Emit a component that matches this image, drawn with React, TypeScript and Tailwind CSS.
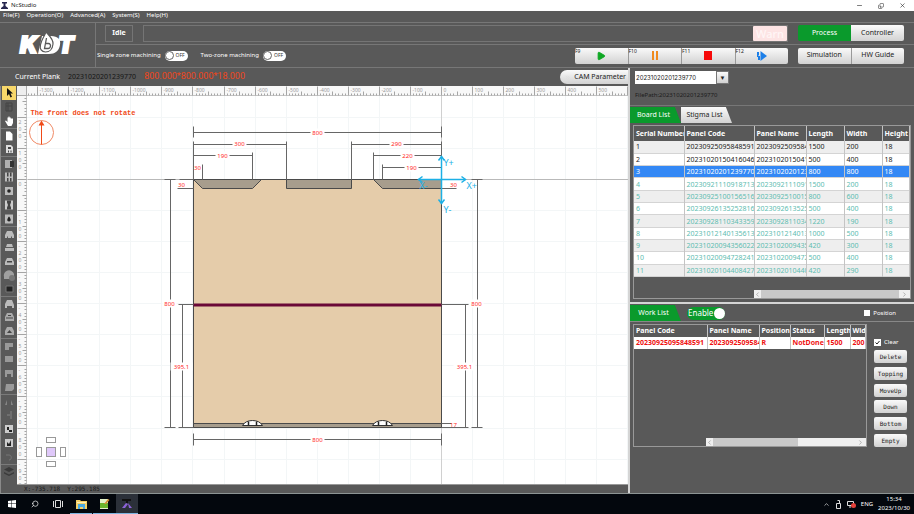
import React, { useState } from "react";
import { Minus, X, Copy, ChevronUp, Search, ChevronLeft, ChevronRight, ChevronsRight, Play } from "lucide-react";

const boards = [
  ["1", "20230925095848591", "1500", "200", "18"],
  ["2", "20231020150416046", "500", "400", "18"],
  ["3", "20231020201239770", "800", "800", "18"],
  ["4", "20230921110918713", "1500", "200", "18"],
  ["5", "20230925100156516", "800", "600", "18"],
  ["6", "20230926135252816", "500", "400", "18"],
  ["7", "20230928110343359", "1220", "190", "18"],
  ["8", "20231012140135613", "1000", "500", "18"],
  ["9", "20231020094356022", "420", "300", "18"],
  ["10", "20231020094728241", "500", "400", "18"],
  ["11", "20231020104408427", "420", "290", "18"],
];

const silver = "bg-gradient-to-b from-[#fafafa] to-[#d2d2d2] text-[#222]";

const Toggle: React.FC<{ id: string; label: string }> = ({ id, label }) => {
  const [on, setOn] = useState(false);
  return (
    <div className="flex items-center gap-1">
      <label htmlFor={id} className="text-[6px] text-white">{label}</label>
      <button
        id={id}
        role="switch"
        aria-checked={on}
        onClick={() => setOn(!on)}
        className="flex h-[10px] w-[23px] items-center rounded-full bg-white text-[5px] text-[#333]"
      >
        <span className="mr-[2px] size-[9px] shrink-0 rounded-full border border-[#666] bg-white" />
        {on ? "ON" : "OFF"}
      </button>
    </div>
  );
};

const Logo = () => (
  <svg width="60" height="26" viewBox="0 0 60 26" fill="#fff" aria-label="KDT" className="overflow-visible">
    <g
      fontFamily="Inter, sans-serif"
      fontWeight="900"
      fontStyle="italic"
      fontSize="23"
      stroke="#fff"
      strokeWidth="2"
    >
      <text x="2" y="21">K</text>
      <text x="40" y="21">T</text>
    </g>
    <path d="M24 4h9c7 0 10 3.500 9 9-1 6-5 9-11 9H20z" />
    <path
      d="M28 0c3 3.500 7.500 7 7 12-.4 5-3.500 8-7.500 8-4 0-6-3-5-7.500C23.500 8 26 5 28 0z"
      stroke="#595959"
      strokeWidth="1.200"
    />
    <path d="M28.500 6L26.500 16.500h3.500c3 0 3.500-5 .5-5h-2.500" fill="none" stroke="#595959" strokeWidth="1.300" />
  </svg>
);

// Glyphs of the drawing tools, each on a 14x14 grid
const tools: React.ReactNode[] = [
  <path d="M5 2v8l2-2 1.500 3.500 1.500-.7L8.500 7.500H11z" fill="#111" />,
  <path d="M4 3h6v8H4zM4 6h6M6 3v8" fill="none" stroke="#444" />,
  <path d="M3 7l1-.5 1.500 1.500V3.500h1V2.500h1v1h1.200v1H11V9l-1.500 3H6z" fill="#fff" />,
  <path d="M4 2.500h4l2.500 2.500v6.500H4z" fill="#fff" />,
  <g><path d="M4 3h5l2 2v6H4z" fill="#ddd" /><path d="M6 5h3v2H6zM6 8.500h1v2H6zM8.500 8.500h1v2h-1z" fill="#444" /></g>,
  <g><path d="M3 3h7v8H3z" fill="#b0b0b0" /><path d="M12 4a3 3 0 0 0 0 6z" fill="#333" /><path d="M8 4h3v6H8z" fill="#333" /></g>,
  <g><path d="M3 2.500h8v9H3z" fill="#bbb" /><path d="M5 2.500h1.500v4H5zM8 2.500h1.500v4H8zM5 8h1.500v3.500H5zM8 8h1.500v3.500H8z" fill="#444" /></g>,
  <g><path d="M3 3h8v8H3z" fill="#bbb" /><circle cx="7" cy="7" r="1.800" fill="#222" /></g>,
  <g><path d="M3 2.500h8v9H3z" fill="#ccc" /><path d="M5 2.500h4v2L8 7l1 2.500v2H5v-2L6 7 5 4.500z" fill="#444" /></g>,
  <g><path d="M3 2.500h8v9H3z" fill="#bbb" /><path d="M7 4.500c2 2 2.500 5 0 5s-2-3 0-5z" fill="#222" /></g>,
  <path d="M5 4h5l2 4v3h-2V9.500H9V11H6V9.500H5V11H3V8z" fill="#bbb" />,
  <path d="M5 4h5l1 3H4zM3 8h9v3H3z" fill="#bbb" />,
  <g><path d="M5 4h5l2 4v3H3V8z" fill="#bbb" /><path d="M5 7h5v1.500H5z" fill="#444" /></g>,
  <g><path d="M2 9a5 5 0 0 1 10-3v5H2z" fill="#a0a0a0" /><circle cx="10" cy="10" r="3" fill="#777" /></g>,
  <g><path d="M4 4h7v6H4z" fill="#222" stroke="#777" /></g>,
  <path d="M5 3h5l2 5v3h-2V9H5v2H3V7z" fill="#bbb" />,
  <g><path d="M5 3h5l2 4v4H3V7z" fill="#aaa" /><path d="M4 8h7M6 5.500h3" stroke="#444" /></g>,
  <g><path d="M5 3h5l2 4v4H3V7z" fill="#aaa" /><path d="M5 9l2.500-3L10 9z" fill="#444" /></g>,
  <path d="M3 4h8v4H7v3H3z" fill="#999" />,
  <path d="M3 4h8v6H3z" fill="#999" />,
  <path d="M3 4h8v7H9V8H5v3H3z" fill="#999" />,
  <path d="M4 4h8v5l-2 2H3z" fill="#999" />,
  <path d="M5 5v5H3zM9 5v5h2z" fill="#858585" />,
  <path d="M9 3v8M5 7h3" stroke="#858585" />,
  <g><path d="M3 3h8v8H3z" fill="#ccc" /><path d="M5 5h2v3h3v2H7V8H5z" fill="#222" /></g>,
  <g><path d="M3 3h8v8H3z" fill="#ccc" /><path d="M5 10V6l2 2 2-4v6" fill="#222" /></g>,
  <path d="M4 5h3c3 0 3 5 0 5" fill="none" stroke="#777" />,
  <path d="M7 2l5 2.500L7 7 2 4.500zM2 7l5 2.500L12 7v1.500L7 11 2 8.500z" fill="#3a3a3a" />,
];
const toolBreaks = [3, 5, 10, 15, 18, 22, 27];

// Dimension value with a white gap behind it
const Dim: React.FC<{ x: number; y: number; children: string; bare?: boolean }> = ({ x, y, children, bare }) => (
  <g>
    {!bare && (
      <rect x={x - children.length * 2 - 1} y={y - 4} width={children.length * 4 + 2} height="8" fill="#fff" />
    )}
    <text x={x} y={y + 2} textAnchor="middle" fontSize="6" fill="#ff1f1f">{children}</text>
  </g>
);

const Hinge: React.FC<{ x: number }> = ({ x }) => (
  <g transform={`translate(${x} 246)`}>
    <path d="M-10 0q3-5 10-5t10 5z" fill="#fff" stroke="#333" />
    <path d="M-4-4v4M4-4v4" stroke="#222" strokeWidth="1.500" />
  </g>
);

const PX_PER_100 = 31.07;

const Canvas = () => {
  const hundreds = Array.from({ length: 21 }, (_, i) => i - 13);
  const rows = Array.from({ length: 12 }, (_, i) => i - 2);
  const minor = Array.from({ length: 210 }, (_, i) => i - 133);
  const minorRows = Array.from({ length: 140 }, (_, i) => i - 27);
  return (
    <svg className="h-full w-full bg-white" fontFamily="'Noto Sans', sans-serif">
      <g transform="translate(424.5 93.5)">
        {/* grid */}
        <g stroke="#f3f6f7">
          {hundreds.map((n) => <path key={n} d={`M${Math.round(n * PX_PER_100)} -90V400`} />)}
          {rows.map((n) => <path key={n} d={`M-420 ${Math.round(n * PX_PER_100)}H900`} />)}
        </g>
        <path d="M-414 0H900" stroke="#b9b9b9" />
        <path d="M0 -84V400" stroke="#d0d0d0" />

        {/* rulers */}
        <rect x="-425" y="-94" width="1400" height="10" fill="#f8f8f8" />
        <rect x="-425" y="-94" width="10" height="900" fill="#f8f8f8" />
        <g stroke="#a5a5a5">
          <path d="M-415 -84H900M-415 -84V700" stroke="#c4c4c4" />
          {minor.map((n) => (
            <path key={n} d={`M${Math.round(n * PX_PER_100 / 10)} ${n % 10 === 0 ? -93 : n % 5 === 0 ? -88 : -86}V-84`} />
          ))}
          {minorRows.map((n) => (
            <path key={n} d={`M${n % 10 === 0 ? -424 : n % 5 === 0 ? -419 : -417} ${Math.round(n * PX_PER_100 / 10)}H-415`} />
          ))}
        </g>
        <g fill="#999" fontSize="5">
          {hundreds.map((n) => (
            <text key={n} x={Math.round(n * PX_PER_100) + 2} y="-88">{n * 100}</text>
          ))}
          {rows.map((n) =>
            String(n * -100).split("").map((c, i) => (
              <text key={`${n}-${i}`} x="-423" y={Math.round(n * PX_PER_100) + 6 + i * 7}>{c}</text>
            ))
          )}
        </g>
        <rect x="-425" y="-94" width="10" height="10" fill="#eee" stroke="#aaa" />

        {/* work piece */}
        <rect x="-248" width="248" height="248" fill="#e5ccaa" stroke="#4a4a4a" />
        <g fill="#a79d8d" stroke="#4a4a4a">
          <path d="M-248 0L-239 9H-189L-180 0z" />
          <path d="M-155 0H-90V9H-155z" />
          <path d="M-68 0L-59 9H0V0z" />
          <path d="M-248 244H0V248H-248z" />
        </g>
        <rect x="-248" y="124" width="248" height="3" fill="#6b0837" />
        <Hinge x={-189} />
        <Hinge x={-59} />

        {/* dimensions */}
        <g stroke="#666" fill="none">
          <path d="M-248 -47H0M-248 -53V-42M0 -53V-42" />
          <path d="M-248 -38V0M-248 -35H-155M-155 -38V0M-90 -38V0M-90 -35H0M0 -38V0" />
          <path d="M-248 -24H-189M-189 -27V0M-239 -15V0" />
          <path d="M-68 -27V0M-68 -24H0M-59 -15V0M-59 -12H0" />
          <path d="M-264 9H-248M0 9H15M0 244H10" />
          <path d="M-271 0V248M-277 0H-266M-262 0H-248M-277 248H-266M-263 125H-248M-259 125V248M-263 248H-248" />
          <path d="M36 0V248M30 0H41M30 248H41M0 125H27M24 125V248M0 248H27" />
          <path d="M-248 260H0M-248 254V266M0 254V266" />
        </g>
        <Dim x={-124} y={-47}>800</Dim>
        <Dim x={-202} y={-36}>300</Dim>
        <Dim x={-219} y={-24}>190</Dim>
        <Dim x={-244} y={-12} bare>30</Dim>
        <Dim x={-45} y={-36}>290</Dim>
        <Dim x={-34} y={-24}>220</Dim>
        <Dim x={-30} y={-12}>190</Dim>
        <Dim x={-260} y={5} bare>30</Dim>
        <Dim x={12} y={5} bare>30</Dim>
        <Dim x={-272} y={124}>800</Dim>
        <Dim x={35} y={124}>800</Dim>
        <Dim x={-260} y={187}>395.1</Dim>
        <Dim x={23} y={187}>395.1</Dim>
        <Dim x={12} y={245} bare>17</Dim>
        <Dim x={-124} y={260}>800</Dim>

        {/* axes */}
        <g stroke="#1cb0e6" strokeWidth="1.500" fill="none">
          <path d="M0 -23V24" />
          <path d="M-3 -19L0 -23L3 -19" />
          <path d="M-3 20L0 24L3 20" />
          <path d="M-23 0H24" />
          <path d="M-19 -3L-23 0L-19 3" />
          <path d="M20 -3L24 0L20 3" />
        </g>
        <g fill="#1cb0e6" fontSize="9">
          <text x="2" y="-14">Y+</text>
          <text x="2" y="33">Y-</text>
          <text x="25" y="9">X+</text>
          <text x="-22" y="9">X-</text>
        </g>

        {/* orientation */}
        <text x="-411" y="-65" fontSize="7" fontWeight="bold" fontFamily="'Liberation Mono', monospace" fill="#f04a18">
          The front does not rotate
        </text>
        <circle cx="-400" cy="-47" r="12" fill="none" stroke="#f08a66" />
        <path d="M-400 -35V-56" stroke="#f04a18" />
        <path d="M-403 -54L-400 -59L-397 -54z" fill="#f04a18" />

        <g fill="#fff" stroke="#999">
          <rect x="-395" y="258" width="9" height="5" />
          <rect x="-395" y="282" width="9" height="5" />
          <rect x="-405" y="268" width="5" height="9" />
          <rect x="-381" y="268" width="5" height="9" />
          <rect x="-395" y="268" width="9" height="9" fill="#dfc8fa" />
        </g>
      </g>
    </svg>
  );
};

const Scroll: React.FC<{ thumb: string }> = ({ thumb }) => (
  <div className="flex h-2 items-center bg-[#efefef] text-[#888]">
    <ChevronLeft size={7} className="shrink-0" />
    <div className="h-full flex-1">
      <div className={`h-full bg-[#c9c9c9] ${thumb}`} />
    </div>
    <ChevronRight size={7} className="mx-[2px] shrink-0" />
  </div>
);

const cell = "overflow-hidden border-r border-[#c4c4c4] p-0 pl-[2px] whitespace-nowrap";

const BoardTable = () => {
  const [selected, setSelected] = useState("3");
  return (
    <table className="h-[151px] w-full table-fixed border-collapse text-left text-[7px] leading-[9px]">
      <colgroup>
        <col className="w-[50px]" /><col className="w-[70px]" /><col className="w-[52px]" />
        <col className="w-[38px]" /><col className="w-[38px]" /><col />
      </colgroup>
      <thead>
        <tr className="h-[15px] text-white">
          {["Serial Number", "Panel Code", "Panel Name", "Length", "Width", "Height"].map((h) => (
            <th key={h} className={`${cell} font-bold`}>{h}</th>
          ))}
        </tr>
      </thead>
      <tbody>
        {boards.map(([no, code, length, width, height], i) => (
          <tr
            key={no}
            onClick={() => setSelected(no)}
            className={`h-[12px] border-b border-[#d4d4d4] ${
              selected === no
                ? "bg-[#3388f5] text-white"
                : `${i % 2 === 0 ? "bg-[#eeeeee]" : "bg-white"} ${i < 3 ? "text-[#222]" : "text-[#5dbdb0]"}`
            }`}
          >
            <td className={cell}>{no}</td>
            <td className={cell}>{code}</td>
            <td className={cell}>{code}</td>
            <td className={cell}>{length}</td>
            <td className={cell}>{width}</td>
            <td className={cell}>{height}</td>
          </tr>
        ))}
      </tbody>
    </table>
  );
};

const WorkTable = () => (
  <table className="w-full table-fixed border-collapse text-left text-[7px] leading-[12px] font-bold">
    <colgroup>
      <col className="w-[73px]" /><col className="w-[52px]" /><col className="w-[31px]" />
      <col className="w-[34px]" /><col className="w-[26px]" /><col />
    </colgroup>
    <thead>
      <tr className="text-white">
        {["Panel Code", "Panel Name", "Position", "Status", "Length", "Width"].map((h) => (
          <th key={h} className={cell}>{h}</th>
        ))}
      </tr>
    </thead>
    <tbody>
      <tr className="bg-white text-[#ee1111]">
        {["20230925095848591", "20230925095848591", "R", "NotDone", "1500", "200"].map((c, i) => (
          <td key={i} className={cell}>{c}</td>
        ))}
      </tr>
    </tbody>
  </table>
);

const Tab: React.FC<{ active?: boolean; children: string }> = ({ active, children }) => (
  <button
    className={`h-4 w-[51px] pr-1 text-[7px] [clip-path:polygon(0_0,88%_0,100%_100%,0_100%)] ${
      active ? "bg-[#0a9a2c] text-white" : silver
    }`}
  >
    {children}
  </button>
);

const RightPanel = () => (
  <aside className="flex w-[284px] shrink-0 flex-col">
    <div className="flex flex-col items-start gap-1 border-b border-[#777] px-[5px] pt-[3px] pb-[3px]">
      <div className="flex h-[13px]">
        <input
          aria-label="Plank code"
          defaultValue="20231020201239770"
          className="w-[81px] bg-white px-px font-[Inter,sans-serif] text-[6px] text-[#222]"
        />
        <button aria-label="Open plank list" className={`w-[13px] border border-[#777] text-[6px] leading-none ${silver}`}>▼</button>
      </div>
      <p className="flex h-[14px] items-center text-[6px] text-[#1c1c1c]">FilePath:20231020201239770</p>
    </div>
    <div className="flex pt-px">
      <Tab active>Board List</Tab>
      <Tab>Stigma List</Tab>
    </div>
    <div className="mx-[3px] mt-[2px] flex h-[174px] flex-col justify-between border border-[#999]">
      <BoardTable />
      <div className="ml-[120px]"><Scroll thumb="w-full" /></div>
    </div>
    <div className="mt-[3px] h-[2px] bg-[#d5d5d5]" />

    <div className="flex items-center border-b border-[#888] pt-px">
      <Tab active>Work List</Tab>
      <button
        role="switch"
        aria-checked="true"
        className="ml-[6px] flex h-[13px] w-[38px] items-center justify-between rounded-full bg-[#0a9a2c] pl-px text-[8px] leading-none text-white"
      >
        Enable<span className="size-[11px] shrink-0 rounded-full bg-white" />
      </button>
      <label className="mr-[18px] ml-auto flex items-center gap-[3px] text-[6px] text-white">
        <input type="checkbox" className="size-[6px] appearance-none bg-white" />
        Position
      </label>
    </div>
    <div className="flex pt-[2px] pr-[7px] pl-[3px]">
      <div className="flex h-[123px] min-w-0 flex-1 flex-col justify-between overflow-hidden border border-[#999]">
        <WorkTable />
        <div className="ml-[72px]"><Scroll thumb="w-3/5" /></div>
      </div>
      <div className="ml-[7px] flex w-[33px] flex-col pt-[14px] font-['DejaVu_Sans_Mono',monospace] text-[6px]">
        <label className="mb-1 flex h-2 items-center gap-[3px] font-['Noto_Sans',sans-serif] text-[6px] text-white">
          <span className="grid size-[7px] place-items-center">
            <input type="checkbox" defaultChecked className="peer col-start-1 row-start-1 size-[7px] appearance-none bg-white" />
            <svg viewBox="0 0 7 7" className="pointer-events-none invisible col-start-1 row-start-1 size-[7px] peer-checked:visible">
              <path d="M1.500 3.500L3 5L5.500 2" fill="none" stroke="#222" />
            </svg>
          </span>
          Clear
        </label>
        <div className="flex h-[97px] flex-col justify-between">
          {["Delete", "Topping", "MoveUp", "Down", "Bottom", "Empty"].map((b) => (
            <button key={b} className={`h-[13px] rounded-[2px] ${silver}`}>{b}</button>
          ))}
        </div>
      </div>
    </div>
  </aside>
);

const runKeys = [
  { key: "F9", name: "Start", icon: <Play size={10} fill="#0fa824" stroke="#0fa824" /> },
  { key: "F10", name: "Pause", icon: <svg width="6" height="9"><path d="M0 0h2v9H0zM4 0h2v9H4z" fill="#f08a1c" /></svg> },
  { key: "F11", name: "Stop", icon: <svg width="8" height="9"><path d="M0 0h8v9H0z" fill="#f60909" /></svg> },
  { key: "F12", name: "Resume", icon: <svg width="10" height="10"><path d="M3.500 0L10 5L3.500 10z" fill="#1c7fe8" /><path d="M0 1h2v3L1 5h2v4H1V6H0z" fill="#1c7fe8" /></svg> },
];

const Header = () => (
  <header className="flex h-[46px] shrink-0 border-y border-[#777]">
    <div className="flex w-[96px] shrink-0 items-center justify-center border-r border-[#777]">
      <Logo />
    </div>
    <div className="flex min-w-0 flex-1 flex-col">
      <div className="flex h-[22px] items-center border-b border-[#777] pr-[10px] pb-px pl-[9px]">
        <div className="flex h-[17px] w-[28px] items-center justify-center border border-[#757575] text-[7px] font-bold text-white">Idle</div>
        <div className="ml-[10px] flex h-[17px] flex-1 justify-end border border-[#757575]">
          <div className="flex w-[34px] items-center justify-center rounded-[1px] bg-[#fde4e4] text-[11px] leading-none font-medium text-[#fff6f6]">Warn</div>
        </div>
        <div className="ml-[10px] flex h-4 w-[106px] overflow-hidden rounded-[2px] text-[7px]">
          <button className="flex-1 bg-[#0a9a2c] text-white">Process</button>
          <button className={`flex-1 ${silver}`}>Controller</button>
        </div>
      </div>
      <div className="flex flex-1 items-center pr-[10px] pb-px pl-px">
        <div className="flex gap-[13px]">
          <Toggle id="single-zone" label="Single zone machining" />
          <Toggle id="two-zone" label="Two-zone machining" />
        </div>
        <div className="ml-auto flex h-4 w-[213px] overflow-hidden rounded-[2px]">
          {runKeys.map(({ key, name, icon }) => (
            <button key={key} aria-label={name} className={`flex flex-1 border-r border-[#999] last:border-r-0 ${silver}`}>
              <span className="w-5 text-left text-[5px] leading-[7px]">{key}</span>
              <span className="flex w-3 items-center justify-center self-center">{icon}</span>
            </button>
          ))}
        </div>
        <div className="ml-[10px] flex h-4 w-[106px] overflow-hidden rounded-[2px] text-[7px]">
          <button className={`flex-1 border-r border-[#999] ${silver}`}>Simulation</button>
          <button className={`flex-1 ${silver}`}>HW Guide</button>
        </div>
      </div>
    </div>
  </header>
);

const Taskbar = () => (
  <footer className="flex h-5 shrink-0 items-center bg-[#03070d] text-white">
    <button aria-label="Start menu" className="flex h-full w-[23px] items-center justify-center">
      <svg width="8" height="8"><path d="M0 1l3.500-.5v3H0zM4 .5L8 0v3.500H4zM0 4h3.500v3.500L0 7zM4 4h4v4l-4-.5z" fill="#fff" /></svg>
    </button>
    <button aria-label="Search" className="flex h-full w-[23px] items-center justify-center">
      <Search size={8} className="-scale-x-100" />
    </button>
    <button aria-label="Task view" className="flex h-full w-[23px] items-center justify-center">
      <svg width="10" height="8" fill="none" stroke="#ddd"><path d="M2.500 .5h5v7h-5zM.5 1v6M9.500 1v6" /></svg>
    </button>
    <button aria-label="File Explorer" className="mx-px flex h-full w-[22px] items-center justify-center border-b border-[#7db4e0]">
      <svg width="11" height="10"><path d="M0 1h4l1 1h6v8H0z" fill="#f3cf67" /><path d="M2 5h7v5H7V8H4v2H2z" fill="#4aa8e0" /><path d="M1 3h9v1H1z" fill="#fff2b8" /></svg>
    </button>
    <button aria-label="Notepad" className="flex h-full w-[23px] items-center justify-center border-b border-[#7db4e0]">
      <svg width="11" height="11"><path d="M1 1h8v10H1z" fill="#e4f3c8" /><path d="M1 5h8v5H1z" fill="#6cb52c" /><path d="M5 6l4-5 1.500 1L7 6z" fill="#d98e32" /></svg>
    </button>
    <button aria-label="NcStudio" className="flex h-full w-[22px] items-center justify-center border-b border-[#7db4e0] bg-[#2b3039]">
      <svg width="12" height="11"><path d="M1 1h9v2H7v2H5V3H1z" fill="#111" /><path d="M5 5L1 10h3l3-4zM7 5l1 5h3z" fill="#8c62d8" /></svg>
    </button>
    <div className="ml-auto flex items-center gap-[5px] pr-1 text-[6px]">
      <ChevronUp size={7} />
      <svg width="7" height="9" fill="none" stroke="#ddd"><path d="M1.500 3.500h4v5h-4zM2.500 .5h2v3" /></svg>
      <svg width="9" height="8"><path d="M.5 1.500h6v4h-6zM3 6v2" fill="none" stroke="#ddd" /><circle cx="6.500" cy="5.500" r="2.500" fill="#e5413a" /></svg>
      <span>ENG</span>
      <div className="text-center leading-[9px]">
        <div>15:34</div>
        <div>2023/10/30</div>
      </div>
    </div>
  </footer>
);

const App: React.FC = () => (
  <div className="flex h-screen flex-col overflow-hidden bg-[#595959] font-['Noto_Sans',sans-serif]">
    <div className="flex h-[11px] shrink-0 items-center bg-white text-[6px] text-[#222]">
      <svg width="7" height="7" className="mr-[3px] ml-[1px]"><path d="M1 0h5v1.500H4.500V4L7 6v1H0V6l2.500-2V1.500H1z" fill="#26264f" /></svg>
      NcStudio
      <div className="ml-auto flex items-center gap-[15px] pr-2">
        <button aria-label="Minimize"><Minus size={7} /></button>
        <button aria-label="Restore"><Copy size={6} className="-scale-y-100" /></button>
        <button aria-label="Close"><X size={7} /></button>
      </div>
    </div>
    <nav className="flex h-[11px] shrink-0 items-center gap-[7px] px-[3px] pb-[3px] text-[6px] leading-[8px] text-white">
      {["File(F)", "Operation(O)", "Advanced(A)", "System(S)", "Help(H)"].map((m) => (
        <button key={m}>{m}</button>
      ))}
    </nav>
    <Header />
    <main className="flex min-h-0 flex-1">
      <section className="flex min-w-0 flex-1 flex-col">
        <div className="flex h-[18px] shrink-0 items-center pl-[15px]">
          <span className="text-[7px] text-white">Current Plank</span>
          <span className="ml-[8px] text-[7px] text-[#151515]">20231020201239770</span>
          <span className="ml-[8px] font-[Roboto,sans-serif] text-[9px] text-[#f0461c]">800.000*800.000*18.000</span>
          <button className={`ml-auto flex h-[14px] items-center gap-[3px] rounded-l-full pr-[2px] pl-1 text-[7px] ${silver}`}>
            <ChevronsRight size={7} className="text-[#ddd]" />
            CAM Parameter
          </button>
        </div>
        <div className="flex min-h-0 flex-1">
          <div className="flex w-[17px] shrink-0 flex-col border-l border-[#8a8a8a]">
            {tools.map((glyph, i) => (
              <button
                key={i}
                aria-label={`Tool ${i + 1}`}
                className={`flex h-[14px] shrink-0 items-center justify-center ${
                  i === 0 ? "mr-px ml-px bg-[#f7d76a]" : toolBreaks.includes(i) ? "border-t border-[#7a7a7a]" : ""
                }`}
              >
                <svg width="14" height="14" viewBox="0 0 14 14">{glyph}</svg>
              </button>
            ))}
          </div>
          <div className="flex min-w-0 flex-1 flex-col">
            <div className="min-h-0 flex-1 overflow-hidden"><Canvas /></div>
            <div className="flex h-[9px] shrink-0 items-center border-t border-[#999] pl-[7px] font-['DejaVu_Sans_Mono',monospace] text-[6px] leading-[8px] whitespace-pre text-[#1a1a1a]">
              X:-735.718  Y:295.185
            </div>
          </div>
        </div>
      </section>
      <div className="w-[2px] shrink-0 bg-[#d5d5d5]" />
      <RightPanel />
    </main>
    <div className="h-px shrink-0 bg-[#8d9494]" />
    <Taskbar />
  </div>
);

export default App;
